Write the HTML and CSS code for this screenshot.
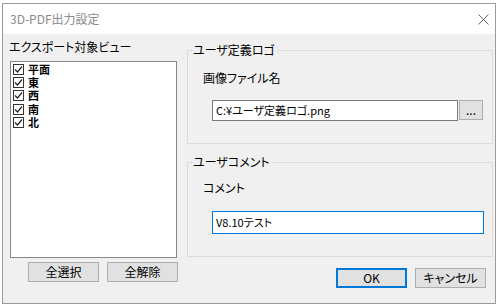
FILE: index.html
```html
<!DOCTYPE html>
<html lang="ja">
<head>
    <meta charset="UTF-8">
    <title>3D-PDF出力設定</title>
    <link rel="stylesheet" href="styles.css">
</head>
<body>

<div class="window">
    <!-- Title bar -->
    <div class="titlebar">
        <span class="title">3D-PDF出力設定</span>
        <svg class="close" width="11" height="11" viewBox="0 0 11 11">
            <path d="M0.5 0.5L10.5 10.5M10.5 0.5L0.5 10.5" stroke="#666" stroke-width="1" fill="none"/>
        </svg>
    </div>

    <div class="content">
        <!-- Left: view list -->
        <div class="left">
            <div class="label">エクスポート対象ビュー</div>
            <ul class="listbox">
                <li><svg class="check" viewBox="0 0 11 11"><rect x="0.5" y="0.5" width="10" height="10" fill="#fff" stroke="#333"/><path d="M2 5.5L4.5 8L9 2.5" fill="none" stroke="#222" stroke-width="1.2"/></svg>平面</li>
                <li><svg class="check" viewBox="0 0 11 11"><rect x="0.5" y="0.5" width="10" height="10" fill="#fff" stroke="#333"/><path d="M2 5.5L4.5 8L9 2.5" fill="none" stroke="#222" stroke-width="1.2"/></svg>東</li>
                <li><svg class="check" viewBox="0 0 11 11"><rect x="0.5" y="0.5" width="10" height="10" fill="#fff" stroke="#333"/><path d="M2 5.5L4.5 8L9 2.5" fill="none" stroke="#222" stroke-width="1.2"/></svg>西</li>
                <li><svg class="check" viewBox="0 0 11 11"><rect x="0.5" y="0.5" width="10" height="10" fill="#fff" stroke="#333"/><path d="M2 5.5L4.5 8L9 2.5" fill="none" stroke="#222" stroke-width="1.2"/></svg>南</li>
                <li><svg class="check" viewBox="0 0 11 11"><rect x="0.5" y="0.5" width="10" height="10" fill="#fff" stroke="#333"/><path d="M2 5.5L4.5 8L9 2.5" fill="none" stroke="#222" stroke-width="1.2"/></svg>北</li>
            </ul>
            <div class="left-buttons">
                <button class="btn">全選択</button>
                <button class="btn">全解除</button>
            </div>
        </div>

        <!-- Right: logo + comment groups -->
        <div class="right">
            <fieldset class="group logo-group">
                <legend>ユーザ定義ロゴ</legend>
                <div class="field-label">画像ファイル名</div>
                <div class="file-row">
                    <div class="textbox file-box">C:¥ユーザ定義ロゴ.png</div>
                    <button class="btn browse">...</button>
                </div>
            </fieldset>

            <fieldset class="group comment-group">
                <legend>ユーザコメント</legend>
                <div class="field-label">コメント</div>
                <div class="textbox comment-box">V8.10テスト</div>
            </fieldset>

            <div class="dialog-buttons">
                <button class="btn ok">OK</button>
                <button class="btn">キャンセル</button>
            </div>
        </div>
    </div>
</div>

</body>
</html>
```

FILE: styles.css
```css
/* Dialog font */
body, button, legend {
    font-family: "Noto Sans CJK JP", sans-serif;
    font-feature-settings: "palt";
    font-size: 12px;
}

body {
    margin: 0;
    padding: 3px 0 0 2px;
    background: #fff;
    color: #000;
}

.window {
    box-sizing: border-box;
    width: 494px;
    border: 1px solid #9a9a9a;
    background: #f0f0f0;
}

/* Title bar */
.titlebar {
    height: 30px;
    background: #fff;
    display: flex;
    align-items: center;
    justify-content: space-between;
    padding: 0 6px 0 7px;
}

.title {
    color: #8a8a8a;
    line-height: 14px;
}

.close {
    display: block;
}

.content {
    display: flex;
    height: 269px;
    padding: 6px 0 0 6px;
    box-sizing: border-box;
}

/* Left column */
.left {
    width: 178px;
    display: flex;
    flex-direction: column;
}

.label {
    line-height: 14px;
}

.listbox {
    list-style: none;
    margin: 7px 0 0 1px;
    padding: 1px 0 0 2px;
    box-sizing: border-box;
    width: 167px;
    height: 197px;
    background: #fff;
    border: 1px solid #828790;
}

.listbox li {
    display: flex;
    align-items: center;
    height: 13.2px;
    font-size: 11px;
    font-weight: bold;
    line-height: 13px;
}

.check {
    width: 11px;
    height: 11px;
    margin-right: 4px;
    flex: none;
}

.left-buttons {
    display: flex;
    gap: 8px;
    margin: 4px 0 0 19px;
}

/* Buttons */
.btn {
    box-sizing: border-box;
    width: 71px;
    height: 20px;
    padding: 0;
    background: #e1e1e1;
    border: 1px solid #adadad;
    color: #000;
    line-height: 16px;
}

.btn.ok {
    border: 2px solid #0078d7;
}

.btn.browse {
    width: 24px;
    height: 20px;
    margin-left: 1px;
    line-height: 12px;
}

/* Right column */
.right {
    width: 306px;
    margin-top: 3px;
    display: flex;
    flex-direction: column;
}

.group {
    margin: 0;
    padding: 0 0 22px 5px;
    border: 1px solid #dcdcdc;
    min-width: 0;
}

.group legend {
    padding: 0 2px 0 0;
    line-height: 14px;
}

.field-label {
    margin-left: 10px;
    line-height: 14px;
}

.logo-group .field-label {
    margin-top: 14px;
}

.comment-group {
    margin-top: 11px;
}

.comment-group .field-label {
    margin-top: 12px;
}

.file-row {
    display: flex;
    align-items: flex-start;
    margin: 15px 0 0 19px;
}

.textbox {
    box-sizing: border-box;
    background: #fff;
    border: 1px solid #7a7a7a;
    padding: 0 3px;
    font-size: 11px;
    white-space: nowrap;
}

.file-box {
    width: 246px;
    height: 21px;
    line-height: 19px;
}

.comment-box {
    width: 272px;
    height: 23px;
    line-height: 21px;
    margin: 16px 0 0 19px;
    border-color: #0078d7;
}

.dialog-buttons {
    display: flex;
    justify-content: flex-end;
    gap: 8px;
    margin-top: 11px;
    padding-right: 7px;
}
```
